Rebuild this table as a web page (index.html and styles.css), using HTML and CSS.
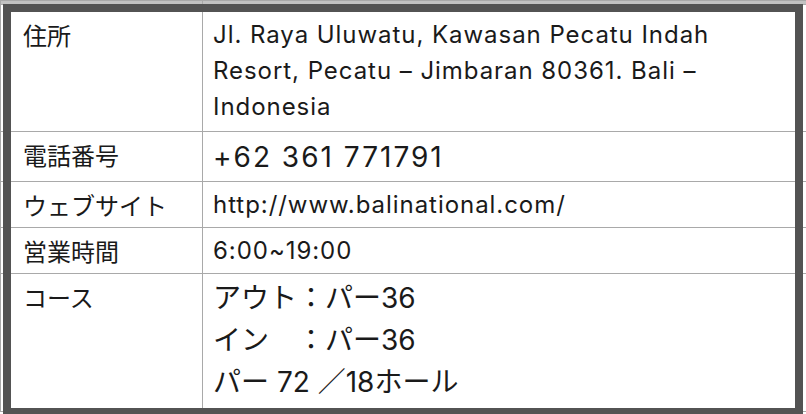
FILE: index.html
```html
<!DOCTYPE html>
<html lang="ja">
<head>
<meta charset="utf-8">
<title>コース情報</title>
<link rel="stylesheet" href="styles.css">
</head>
<body>
<div class="wrap">
  <table class="info">
    <colgroup><col class="c-label"><col class="c-value"></colgroup>
    <tr class="ghost"><td></td><td></td></tr>
    <tr class="r-address">
      <th>住所</th>
      <td class="latin">Jl. Raya Uluwatu, Kawasan Pecatu Indah<br>Resort, Pecatu – Jimbaran 80361. Bali –<br>Indonesia</td>
    </tr>
    <tr class="r-phone">
      <th>電話番号</th>
      <td class="big">+62 361 771791</td>
    </tr>
    <tr class="r-web">
      <th>ウェブサイト</th>
      <td class="latin">http://www.balinational.com/</td>
    </tr>
    <tr class="r-hours">
      <th>営業時間</th>
      <td class="latin">6:00~19:00</td>
    </tr>
    <tr class="r-course">
      <th>コース</th>
      <td class="big course">アウト：パー36<br>イン　：パー36<br>パー 72 ／18ホール</td>
    </tr>
  </table>
  <div class="frame"></div>
</div>
</body>
</html>
```
FILE: styles.css
```css
html, body {
  margin: 0;
  padding: 0;
  background: #ffffff;
}
body {
  width: 806px;
  height: 414px;
  overflow: hidden;
  font-family: "Inter", "Noto Sans CJK JP", sans-serif;
  color: #1a1a1a;
}
.wrap {
  position: relative;
  width: 806px;
  height: 414px;
  overflow: hidden;
}
.info {
  width: 808px;
  border-collapse: collapse;
  table-layout: fixed;
}
.c-label { width: 202px; }
.info th, .info td {
  border: 1px solid #a9a9a9;
  vertical-align: top;
  text-align: left;
  font-weight: normal;
  padding: 5px 10px 4px 10px;
  font-size: 24px;
  line-height: 36px;
}
.info td.latin {
  letter-spacing: 0.95px;
}
.info th {
  font-family: "Noto Sans CJK JP", sans-serif;
  font-size: 24px;
  padding-left: 22px;
}
.ghost td {
  height: 3px;
  padding: 0;
  background: #c2c2c2;
  line-height: 0;
  font-size: 0;
}
.r-address th, .r-address td {
  padding-top: 12px;
  padding-bottom: 6px;
}
.r-phone td.big {
  font-size: 28px;
  line-height: 40px;
  letter-spacing: 2px;
  padding-top: 5px;
  padding-bottom: 4px;
}
.r-phone th { padding-bottom: 8px; }
.r-course td.course {
  font-size: 28px;
  line-height: 42px;
  padding-top: 3px;
  padding-bottom: 8px;
}
.frame {
  position: absolute;
  left: 3px;
  top: 4px;
  width: 800px;
  height: 412px;
  box-sizing: border-box;
  border: 8px solid #535353;
  pointer-events: none;
}
```
